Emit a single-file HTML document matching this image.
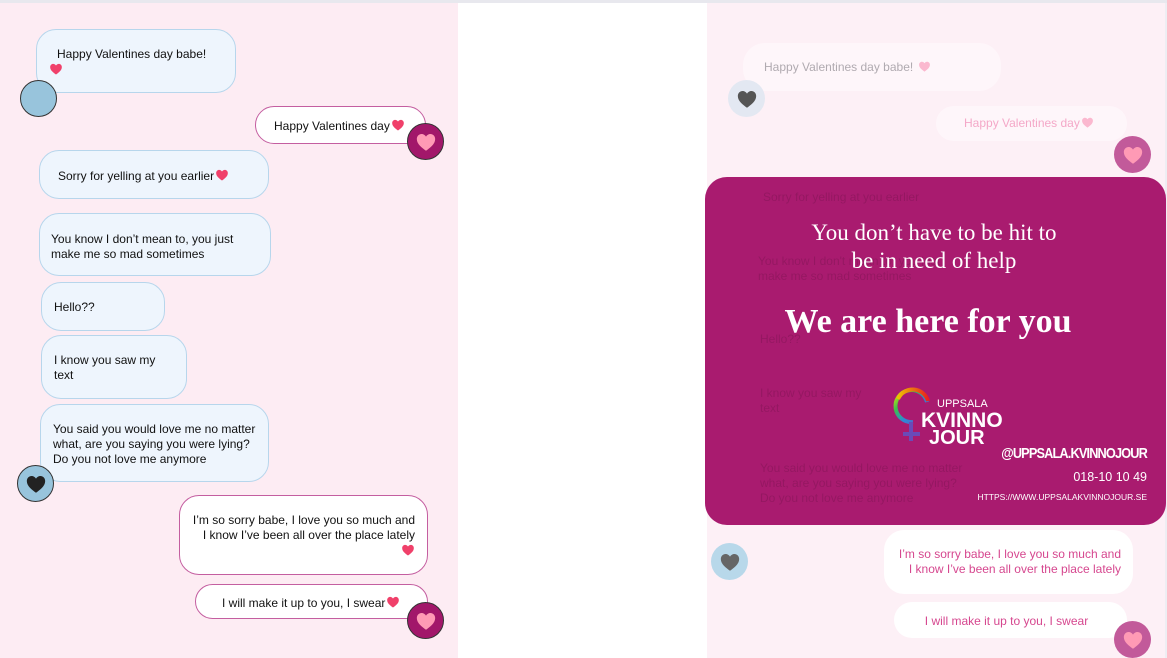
<!DOCTYPE html>
<html><head><meta charset="utf-8"><style>
*{margin:0;padding:0;box-sizing:border-box}
body{width:1167px;height:658px;position:relative;overflow:hidden;background:#fff;font-family:"Liberation Sans",Arial,sans-serif;font-size:12px;color:#111}
.a{position:absolute}
.lb{position:absolute;background:#eef5fd;border:1px solid #b7d6ec;border-radius:20px}
.rb{position:absolute;background:#fff;border:1px solid #c45ea0;border-radius:20px}
.t{position:absolute;white-space:nowrap;line-height:15px}
.av{position:absolute;width:37px;height:37px;border-radius:50%;display:flex;align-items:center;justify-content:center}
.h{display:inline-block;vertical-align:-2px;margin-left:1px}
.fb{position:absolute;background:#fef6fa;border-radius:22px}
.serif{font-family:"Liberation Serif","DejaVu Serif",serif;color:#fff;text-align:center;position:absolute;white-space:nowrap}
</style></head><body>
<svg width="0" height="0" style="position:absolute"><defs><symbol id="hr" viewBox="0 0 24 24"><path d="M12 21.5C8 18.5 2 14.5 2 8.8 2 5.6 4.4 3.3 7.2 3.3c2 0 3.7 1.1 4.8 2.8 1.1-1.7 2.8-2.8 4.8-2.8 2.8 0 5.2 2.3 5.2 5.5 0 5.7-6 9.7-10 12.7z"/></symbol></defs></svg>
<div class="a" style="left:0;top:0;width:1167px;height:3px;background:#e8e8ee"></div>
<div class="a" style="left:0;top:3px;width:458px;height:655px;background:#fdecf3"></div>
<div class="a" style="left:707px;top:3px;width:458px;height:655px;background:#fdf0f6"></div>
<div class="a" style="left:1165px;top:3px;width:2px;height:655px;background:#eeeef3"></div>

<!-- LEFT -->
<div class="lb" style="left:36px;top:29px;width:200px;height:64px"></div>
<div class="t" style="left:57px;top:47px">Happy Valentines day babe!</div>
<svg class="a" style="left:49px;top:62px" width="14" height="14" fill="#f0406a"><use href="#hr"/></svg>
<div class="av" style="left:20px;top:80px;background:#98c4dc;border:1px solid #333"></div>

<div class="rb" style="left:255px;top:106px;width:171px;height:38px"></div>
<div class="t" style="left:274px;top:118px">Happy Valentines day<svg class="h" width="14" height="14" fill="#f0406a"><use href="#hr"/></svg></div>
<div class="av" style="left:407px;top:123px;background:#a2176a;border:1px solid #333"><svg width="22" height="22" fill="#ff9ab5"><use href="#hr"/></svg></div>

<div class="lb" style="left:39px;top:150px;width:230px;height:49px"></div>
<div class="t" style="left:58px;top:168px">Sorry for yelling at you earlier<svg class="h" width="14" height="14" fill="#f0406a"><use href="#hr"/></svg></div>

<div class="lb" style="left:39px;top:213px;width:232px;height:63px"></div>
<div class="t" style="left:51px;top:232px">You know I don’t mean to, you just<br>make me so mad sometimes</div>

<div class="lb" style="left:41px;top:282px;width:124px;height:49px"></div>
<div class="t" style="left:54px;top:300px">Hello??</div>

<div class="lb" style="left:41px;top:335px;width:146px;height:64px"></div>
<div class="t" style="left:54px;top:353px">I know you saw my<br>text</div>

<div class="lb" style="left:40px;top:404px;width:229px;height:78px"></div>
<div class="t" style="left:53px;top:422px">You said you would love me no matter<br>what, are you saying you were lying?<br>Do you not love me anymore</div>
<div class="av" style="left:17px;top:465px;background:#98c4dc;border:1px solid #333"><svg width="22" height="22" fill="#222"><use href="#hr"/></svg></div>

<div class="rb" style="left:179px;top:495px;width:249px;height:80px"></div>
<div class="t" style="left:180px;width:235px;text-align:right;top:513px">I’m so sorry babe, I love you so much and<br>I know I’ve been all over the place lately<br><svg class="h" width="14" height="14" fill="#f0406a"><use href="#hr"/></svg></div>

<div class="rb" style="left:195px;top:584px;width:233px;height:35px"></div>
<div class="t" style="left:222px;top:595px">I will make it up to you, I swear<svg class="h" width="14" height="14" fill="#f0406a"><use href="#hr"/></svg></div>
<div class="av" style="left:407px;top:602px;background:#a2176a;border:1px solid #333"><svg width="22" height="22" fill="#ff9ab5"><use href="#hr"/></svg></div>

<!-- RIGHT -->
<div class="fb" style="left:743px;top:43px;width:258px;height:48px"></div>
<div class="t" style="left:764px;top:60px;color:#b0aab0">Happy Valentines day babe! <svg class="h" width="13" height="13" fill="#fbb8cf"><use href="#hr"/></svg></div>
<div class="av" style="left:728px;top:80px;background:#e3e8f2"><svg width="22" height="22" fill="#555"><use href="#hr"/></svg></div>
<div class="fb" style="left:936px;top:106px;width:191px;height:35px"></div>
<div class="t" style="left:964px;top:116px;color:#f4a8c8">Happy Valentines day<svg class="h" width="13" height="13" fill="#fbb8cf"><use href="#hr"/></svg></div>
<div class="av" style="left:1114px;top:136px;background:#c25a9a"><svg width="22" height="22" fill="#ff9ab5"><use href="#hr"/></svg></div>

<div class="a" style="left:705px;top:177px;width:461px;height:348px;background:#a91b6f;border-radius:22px;overflow:hidden">
 <div class="t" style="left:58px;top:13px;color:rgba(0,0,0,.12)">Sorry for yelling at you earlier</div>
 <div class="t" style="left:53px;top:77px;color:rgba(0,0,0,.12)">You know I don't mean to, you just<br>make me so mad sometimes</div>
 <div class="t" style="left:55px;top:155px;color:rgba(0,0,0,.12)">Hello??</div>
 <div class="t" style="left:55px;top:209px;color:rgba(0,0,0,.12)">I know you saw my<br>text</div>
 <div class="t" style="left:55px;top:284px;color:rgba(0,0,0,.12)">You said you would love me no matter<br>what, are you saying you were lying?<br>Do you not love me anymore</div>
</div>
<div class="serif" style="left:734px;width:400px;top:219px;font-size:23px;line-height:28px">You don’t have to be hit to<br>be in need of help</div>
<div class="serif" style="left:728px;width:400px;top:301px;font-size:34px;font-weight:bold;line-height:42px">We are here for you</div>
<svg class="a" style="left:890px;top:385px" width="115" height="62">
 <defs><linearGradient id="g" x1="0" y1="0" x2="1" y2="1"><stop offset="0" stop-color="#f5e800"/><stop offset=".3" stop-color="#3cc04a"/><stop offset=".6" stop-color="#2a8ad8"/><stop offset="1" stop-color="#7a48c0"/></linearGradient><linearGradient id="g2" x1="0" y1="0" x2="1" y2="0"><stop offset="0" stop-color="#f0c000"/><stop offset="1" stop-color="#e82020"/></linearGradient></defs>
 <path d="M37 17 A16 16 0 1 0 23 37" fill="none" stroke="url(#g)" stroke-width="4"/>
 <path d="M8 14 A16 16 0 0 1 38 16" fill="none" stroke="url(#g2)" stroke-width="4"/>
 <path d="M21 37 V56 M13 49 H30" stroke="#6a4ab8" stroke-width="4" fill="none"/>
 <text x="47" y="22" fill="#fff" font-family="Liberation Sans" font-size="11">UPPSALA</text>
 <text x="31" y="42" fill="#fff" font-family="Liberation Sans" font-weight="bold" font-size="21">KVINNO</text>
 <text x="39" y="59" fill="#fff" font-family="Liberation Sans" font-weight="bold" font-size="20">JOUR</text>
</svg>
<div class="t" style="left:947px;width:200px;text-align:right;top:446px;color:#fff;font-weight:bold;font-size:15px;letter-spacing:-1px;transform:scaleX(.85);transform-origin:right">@UPPSALA.KVINNOJOUR</div>
<div class="t" style="left:947px;width:200px;text-align:right;top:470px;color:#fff;font-size:12.5px">018-10 10 49</div>
<div class="t" style="left:947px;width:200px;text-align:right;top:490px;color:#fff;font-size:8.5px">HTTPS://WWW.UPPSALAKVINNOJOUR.SE</div>

<div class="av" style="left:711px;top:543px;background:#b8d8ea"><svg width="22" height="22" fill="#666"><use href="#hr"/></svg></div>
<div class="a" style="left:884px;top:530px;width:249px;height:64px;background:#fff;border-radius:20px"></div>
<div class="t" style="left:884px;width:237px;text-align:right;top:547px;color:#d6478f">I’m so sorry babe, I love you so much and<br>I know I’ve been all over the place lately</div>
<div class="a" style="left:894px;top:602px;width:233px;height:36px;background:#fff;border-radius:18px"></div>
<div class="t" style="left:894px;width:225px;text-align:center;top:614px;color:#d6478f">I will make it up to you, I swear</div>
<div class="av" style="left:1114px;top:621px;background:#c25a9a"><svg width="22" height="22" fill="#ff9ab5"><use href="#hr"/></svg></div>
</body></html>
